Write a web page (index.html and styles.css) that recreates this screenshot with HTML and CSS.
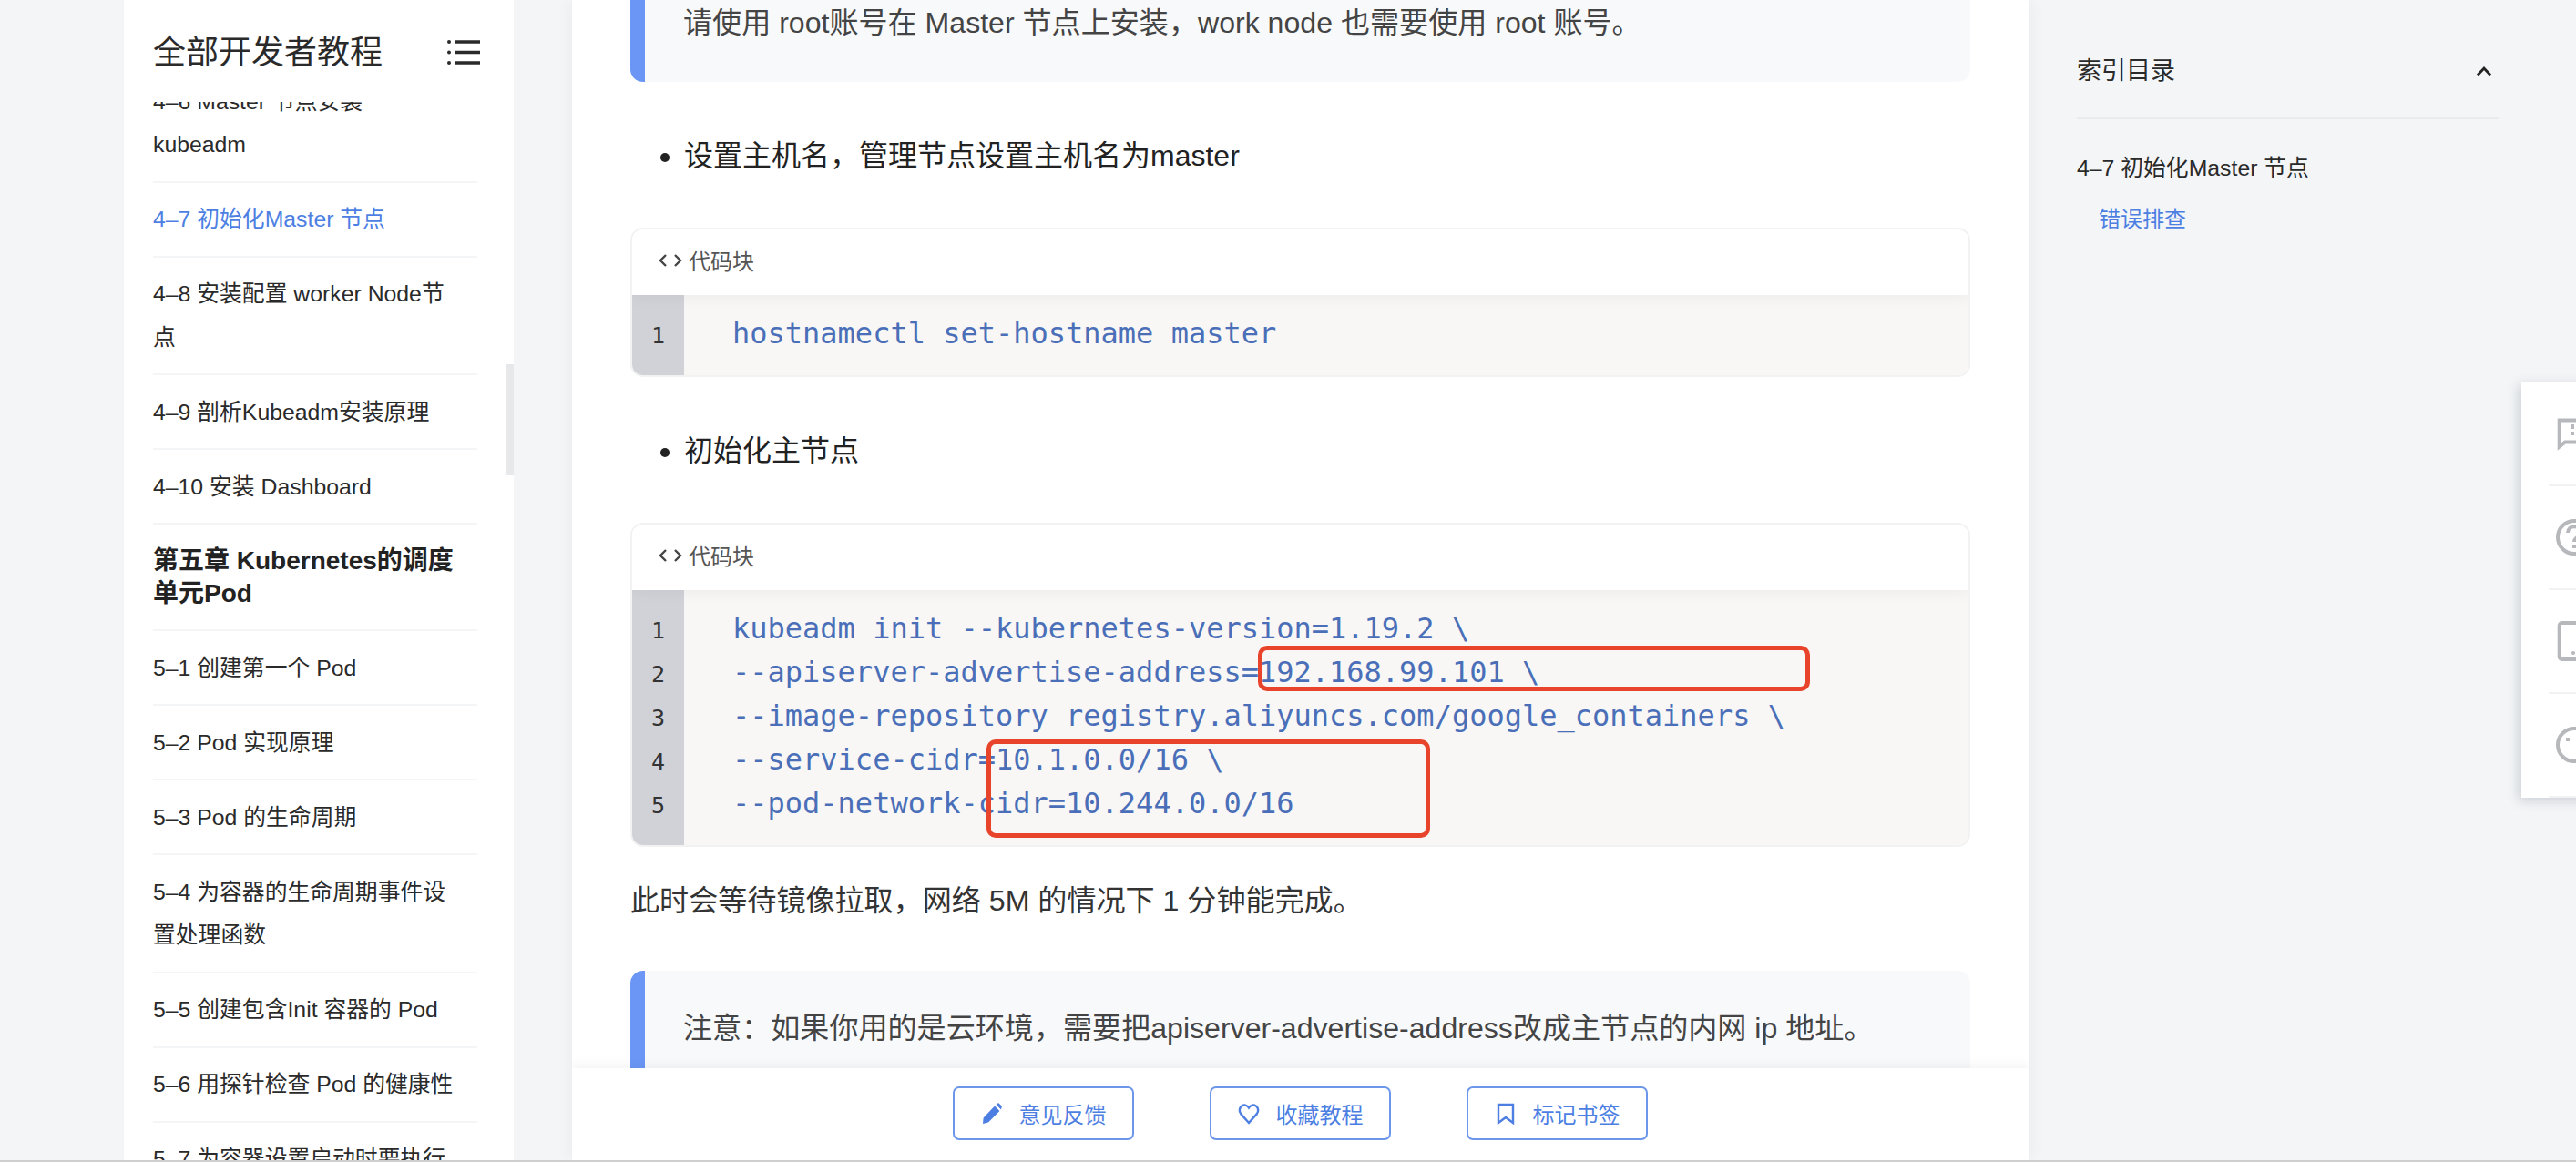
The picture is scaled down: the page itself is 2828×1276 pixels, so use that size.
FILE: index.html
```html
<!DOCTYPE html>
<html lang="zh-CN">
<head>
<meta charset="utf-8">
<title>4-7 初始化Master 节点</title>
<link rel="stylesheet" href="styles.css">
</head>
<body>
<div class="page">
  <aside class="sidebar">
    <header class="side-head">
      <h2 class="side-title">全部开发者教程</h2>
      <svg class="menu-icon" viewBox="0 0 36 27" width="36" height="27"><circle cx="2" cy="2" r="2"/><circle cx="2" cy="13.5" r="2"/><circle cx="2" cy="25" r="2"/><path d="M9 2h27M9 13.5h27M9 25h27"/></svg>
    </header>
    <div class="side-scroll">
      <ul class="side-list">
        <li class="side-item">4–6 Master 节点安装 kubeadm</li>
        <li class="side-item active">4–7 初始化Master 节点</li>
        <li class="side-item">4–8 安装配置 worker Node节点</li>
        <li class="side-item">4–9 剖析Kubeadm安装原理</li>
        <li class="side-item">4–10 安装 Dashboard</li>
        <li class="side-item chapter">第五章 Kubernetes的调度单元Pod</li>
        <li class="side-item">5–1 创建第一个 Pod</li>
        <li class="side-item">5–2 Pod 实现原理</li>
        <li class="side-item">5–3 Pod 的生命周期</li>
        <li class="side-item">5–4 为容器的生命周期事件设置处理函数</li>
        <li class="side-item">5–5 创建包含Init 容器的 Pod</li>
        <li class="side-item">5–6 用探针检查 Pod 的健康性</li>
        <li class="side-item">5–7 为容器设置启动时要执行</li>
      </ul>
    </div>
    <div class="side-thumb"></div>
  </aside>

  <main class="main">
    <article class="article">
      <blockquote class="note note-first">请使用 root账号在 Master 节点上安装，work node 也需要使用 root 账号。</blockquote>
      <ul class="bullets"><li>设置主机名，管理节点设置主机名为master</li></ul>
      <section class="code">
        <div class="code-head">
          <svg class="code-icon" viewBox="0 0 28 18" width="28" height="18"><path d="M9 3 3 9l6 6M19 3l6 6-6 6"/></svg>
          <span>代码块</span>
        </div>
        <div class="code-body">
          <ol class="gutter"><li>1</li></ol>
          <pre class="code-text">hostnamectl set-hostname master</pre>
        </div>
      </section>
      <ul class="bullets"><li>初始化主节点</li></ul>
      <section class="code">
        <div class="code-head">
          <svg class="code-icon" viewBox="0 0 28 18" width="28" height="18"><path d="M9 3 3 9l6 6M19 3l6 6-6 6"/></svg>
          <span>代码块</span>
        </div>
        <div class="code-body">
          <ol class="gutter"><li>1</li><li>2</li><li>3</li><li>4</li><li>5</li></ol>
          <pre class="code-text">kubeadm init --kubernetes-version=1.19.2 \
--apiserver-advertise-address=192.168.99.101 \
--image-repository registry.aliyuncs.com/google_containers \
--service-cidr=10.1.0.0/16 \
--pod-network-cidr=10.244.0.0/16</pre>
          <div class="mark mark-one"></div>
          <div class="mark mark-two"></div>
        </div>
      </section>
      <p class="para">此时会等待镜像拉取，网络 5M 的情况下 1 分钟能完成。</p>
      <blockquote class="note note-second">注意：如果你用的是云环境，需要把apiserver-advertise-address改成主节点的内网 ip 地址。</blockquote>
    </article>
    <footer class="actions">
      <button class="action">
        <svg class="action-icon" viewBox="0 0 24 24" width="24" height="24"><path class="solid" d="M2 23l.6-6.500L15 3.600l5.400 5.400L8 21.400zM16.600 2l1.600-1.400a1 1 0 0 1 1.400 0l3 3a1 1 0 0 1 0 1.400L22 7.400z"/></svg>
        <span>意见反馈</span>
      </button>
      <button class="action">
        <svg class="action-icon" viewBox="0 0 24 24" width="24" height="24"><path d="M12 22 3.400 12.400C1 9.600 1.400 5.600 4 3.600c2.600-2 6-1.400 8 1.800 2-3.200 5.400-3.800 8-1.800 2.600 2 3 6 .6 8.800z"/></svg>
        <span>收藏教程</span>
      </button>
      <button class="action">
        <svg class="action-icon" viewBox="0 0 24 24" width="24" height="24"><path d="M4 2h16v20l-8-6-8 6z"/></svg>
        <span>标记书签</span>
      </button>
    </footer>
  </main>

  <aside class="toc">
    <div class="toc-head">
      <span>索引目录</span>
      <svg class="toc-chevron" viewBox="0 0 18 12" width="18" height="12"><path d="M2 10.500 9 3l7 7.500"/></svg>
    </div>
    <div class="toc-title">4–7 初始化Master 节点</div>
    <div class="toc-link">错误排查</div>
  </aside>
</div>

<nav class="float-panel">
  <div class="float-item"><svg class="float-icon" viewBox="0 0 44 44" width="44" height="44"><path d="M5.700 7.500H42v24H12l-6.300 5z"/><path class="fill" d="M18 12h4v5h-4zM18 20h4v4h-4z"/></svg></div>
  <div class="float-item"><svg class="float-icon" viewBox="0 0 44 44" width="44" height="44"><circle cx="22" cy="22" r="18"/><path d="M15 17c0-9 14-9 14 0 0 5-7 5-7 10"/><path class="fill" d="M20 30h4v4h-4z"/></svg></div>
  <div class="float-item"><svg class="float-icon" viewBox="0 0 44 44" width="44" height="44"><rect x="5.700" y="2" width="38" height="40" rx="3"/><circle class="fill" cx="21" cy="35" r="2"/></svg></div>
  <div class="float-item"><svg class="float-icon" viewBox="0 0 44 44" width="44" height="44"><circle cx="22" cy="22" r="18"/><path class="fill" d="M13 14h4v4h-4z"/></svg></div>
</nav>
</body>
</html>
```
FILE: styles.css
```css
* { box-sizing: border-box; }
html, body { margin: 0; padding: 0; height: 100%; }
body {
  height: 1276px;
  overflow: hidden;
  position: relative;
  background: #f3f5f7;
  border-bottom: 2px solid #cfcfcf;
  font-family: "Liberation Sans", "Noto Sans CJK SC", sans-serif;
  color: #2a2a2a;
}
.page {
  display: flex;
  height: 1274px;
  padding-left: 136px;
}

/* left sidebar */
.sidebar {
  position: relative;
  flex: 0 0 428px;
  display: flex;
  flex-direction: column;
  background: #fff;
  overflow: hidden;
}
.side-head {
  flex: 0 0 112px;
  display: flex;
  align-items: center;
  justify-content: space-between;
  padding: 4px 37px 0 32px;
}
.side-title {
  margin: 0;
  font-size: 36px;
  font-weight: 400;
  line-height: 104px;
  color: #2a2a2a;
}
.menu-icon { fill: #2a2a2a; stroke: #2a2a2a; stroke-width: 0; overflow: visible; margin-top: -2px; }
.menu-icon path { stroke-width: 3.4; fill: none; }
.side-scroll { flex: 1; overflow: hidden; }
.side-list {
  list-style: none;
  margin: -41px 40px 0 32px;
  padding: 0;
}
.side-item {
  padding: 16.5px 22px 16px 0;
  border-bottom: 2px solid #f3f5f7;
  font-size: 24.800px;
  line-height: 47.500px;
  color: #2a2a2a;
}
.side-item.active { color: #4d7fe3; }
.side-item.chapter {
  padding-top: 22px;
  padding-bottom: 21px;
  padding-right: 16px;
  font-size: 28px;
  font-weight: 700;
  line-height: 36px;
  color: #222;
}
.side-thumb {
  position: absolute;
  top: 400px;
  right: 0;
  width: 8px;
  height: 122px;
  background: #e7e8ea;
}

/* centre column */
.main {
  position: relative;
  flex: 0 0 1600px;
  margin-left: 64px;
  background: #fff;
  overflow: hidden;
  box-shadow: 0 0 18px rgba(0, 0, 0, .05);
}
.article { padding: 0 65px 0 64px; }
.note {
  margin: 0;
  padding: 38px 0 41px 42px;
  background: #f8f9fb;
  border-left: 16px solid #6b96f5;
  border-radius: 14px;
  font-size: 32.100px;
  line-height: 48px;
  color: #444;
}
.note-first { margin-top: -37px; }
.note-second { margin-top: 53px; padding-top: 39px; }
.bullets {
  margin: 57px 0 55px;
  padding-left: 59px;
  font-size: 32px;
  line-height: 48px;
  color: #222;
}
.code {
  border: 2px solid #f2f2f2;
  border-radius: 14px;
  overflow: hidden;
  background: #fff;
}
.code-head {
  position: relative;
  z-index: 1;
  display: flex;
  align-items: center;
  gap: 6px;
  height: 72px;
  padding: 0 0 5px 28px;
  background: #fff;
  box-shadow: 0 4px 14px rgba(0, 0, 0, .045);
  font-size: 24px;
  color: #555;
}
.code-icon { fill: none; stroke: #444; stroke-width: 2.400; }
.code-body {
  position: relative;
  display: flex;
  background: #f8f7f5;
  padding-bottom: 21px;
}
.gutter {
  flex: 0 0 57px;
  list-style: none;
  margin: 0 0 -21px;
  padding: 21px 0 19px;
  background: #d1d2d7;
  text-align: center;
  font-family: "DejaVu Sans Mono", monospace;
  font-size: 25px;
  line-height: 48px;
  color: #333;
}
.code-text {
  margin: 0;
  padding: 18px 0 0 53px;
  font-family: "DejaVu Sans Mono", monospace;
  font-size: 32px;
  line-height: 48px;
  color: #4a6fb8;
}
.mark {
  position: absolute;
  border: 5px solid #e8432b;
  border-radius: 10px;
}
.mark-one { left: 687px; top: 61px; width: 606px; height: 50px; }
.mark-two { left: 389px; top: 164px; width: 487px; height: 108px; }
.para {
  margin: 35px 0 0;
  font-size: 32.100px;
  line-height: 48px;
  color: #333;
}

/* bottom action bar, sits over the article */
.actions {
  position: absolute;
  left: 0;
  right: 0;
  bottom: 0;
  height: 101px;
  display: flex;
  justify-content: center;
  gap: 83px;
  padding: 20px 2px 0 0;
  background: #fff;
  box-shadow: 0 -3px 12px rgba(0, 0, 0, .05);
}
.action {
  width: 199px;
  height: 59px;
  display: flex;
  align-items: center;
  justify-content: center;
  gap: 18px;
  padding: 0 0 0 1px;
  border: 2px solid #6b96ea;
  border-radius: 7px;
  background: #fff;
  font-family: inherit;
  font-size: 24px;
  color: #4d7fe3;
}
.action-icon { fill: none; stroke: #4d7fe3; stroke-width: 2.400; }
.action-icon .solid { fill: #4d7fe3; stroke: none; }

/* right index */
.toc {
  flex: 0 0 463px;
  margin-left: 52px;
  padding-top: 53px;
}
.toc-head {
  display: flex;
  align-items: center;
  justify-content: space-between;
  height: 50px;
  padding-right: 7px;
  font-size: 27px;
  line-height: 50px;
  color: #2a2a2a;
}
.toc-chevron { fill: none; stroke: #222; stroke-width: 2.800; }
.toc-title {
  margin-top: 26px;
  padding-top: 34px;
  border-top: 2px solid #e9ebee;
  font-size: 24.800px;
  line-height: 40px;
  color: #2a2a2a;
}
.toc-link {
  margin-top: 16px;
  padding-left: 24px;
  font-size: 24px;
  line-height: 40px;
  color: #4d7fe3;
}

/* floating tools panel, runs off the window's right edge */
.float-panel {
  position: absolute;
  left: 2768px;
  top: 420px;
  width: 100px;
  height: 456px;
  background: #fff;
  box-shadow: -3px 3px 12px rgba(60, 70, 80, .22);
  display: flex;
  flex-direction: column;
  padding-left: 30px;
}
.float-item {
  flex: 1;
  display: flex;
  align-items: center;
  border-bottom: 2px solid #f1f2f3;
  padding-left: 6px;
}
.float-icon { flex: none; fill: none; stroke: #b6b8bb; stroke-width: 4; }
.float-icon .fill { fill: #b6b8bb; stroke: none; }
```
